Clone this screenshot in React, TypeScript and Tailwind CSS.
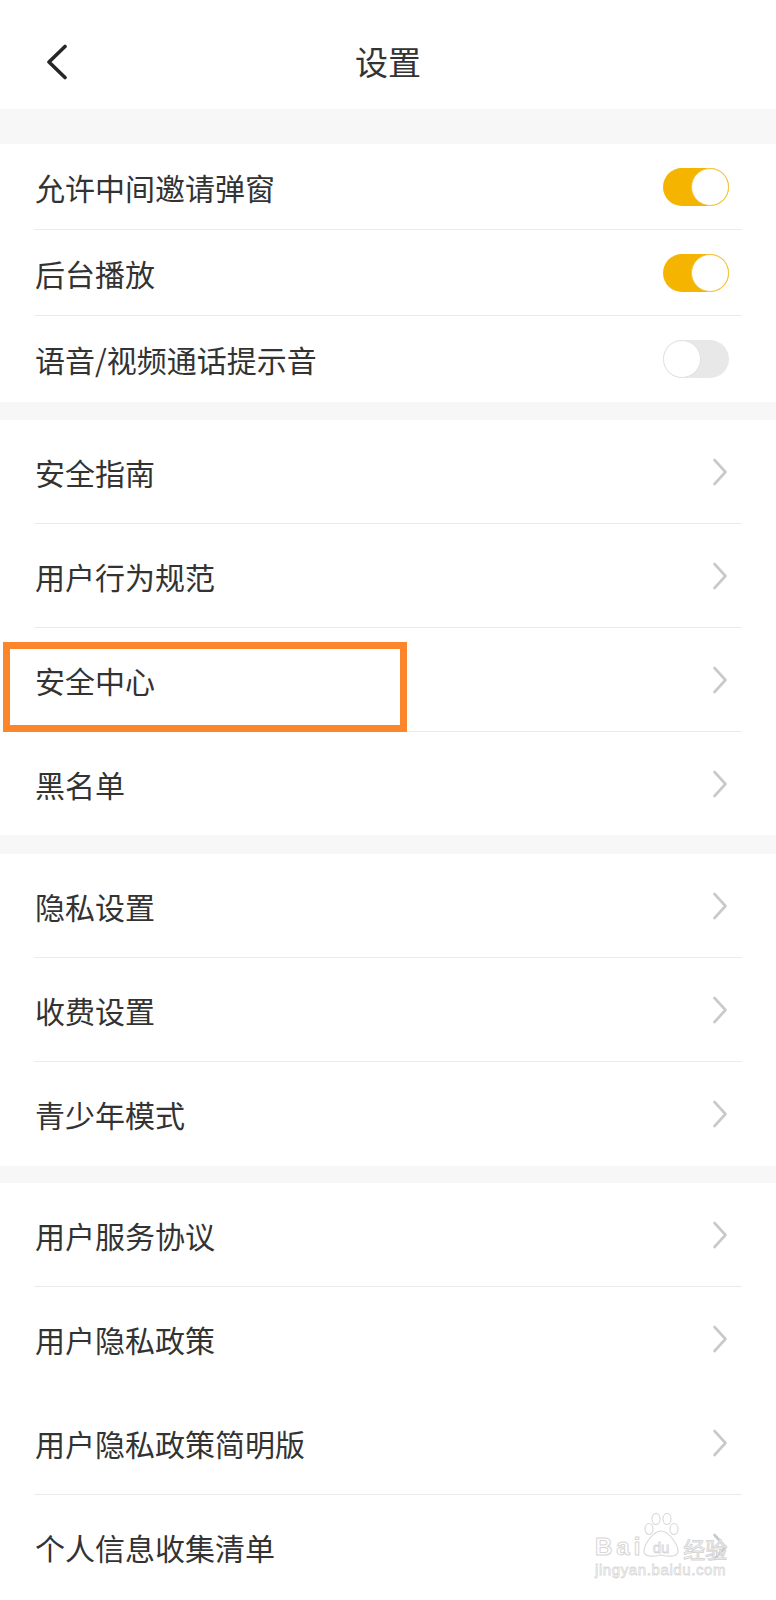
import React from "react";

const FONT = { fontFamily: '"Noto Sans CJK SC", "Noto Sans", sans-serif' };

function Chevron() {
  return (
    <svg width="16" height="28" viewBox="0 0 16 28" fill="none">
      <polyline points="2.5,2 13.5,14 2.5,26" stroke="#c9c9c9" strokeWidth="2.6" strokeLinecap="round" strokeLinejoin="round" />
    </svg>
  );
}

function Toggle({ on }: { on: boolean }) {
  return on ? (
    <div className="flex h-[38px] w-[66px] justify-end rounded-full bg-[#f5b400]">
      <div className="h-[38px] w-[38px] rounded-full border-[1.5px] border-[#f2c63e] bg-white" />
    </div>
  ) : (
    <div className="flex h-[38px] w-[66px] justify-start rounded-full bg-[#e8e8e8]">
      <div className="h-[38px] w-[38px] rounded-full border-[1.5px] border-[#e2e2e2] bg-white" />
    </div>
  );
}

function ToggleRow({ label, on, last }: { label: string; on: boolean; last?: boolean }) {
  return (
    <div className="px-[34px]">
      <div className={`flex h-[86px] items-center justify-between pl-[1px] pr-[13px] ${last ? "" : "border-b border-[#ebebeb]"}`}>
        <span className="text-[30px] leading-none text-[#333333]">{label}</span>
        <Toggle on={on} />
      </div>
    </div>
  );
}

function LinkRow({
  label,
  h,
  border,
  children,
}: {
  label: string;
  h: string;
  border?: boolean;
  children?: React.ReactNode;
}) {
  return (
    <div className="relative px-[34px]">
      <div className={`flex ${h} items-center justify-between pl-[1px] pr-[14px] ${border ? "border-b border-[#ebebeb]" : ""}`}>
        <span className="text-[30px] leading-none text-[#333333]">{label}</span>
        <Chevron />
      </div>
      {children}
    </div>
  );
}

function Gap({ h }: { h: string }) {
  return <div className={`${h} bg-[#f7f7f7]`} />;
}

function Watermark() {
  return (
    <div className="pointer-events-none absolute left-[595px] top-[18px] flex flex-col items-start">
      <div className="flex items-end">
        <span
          className="text-[24px] font-bold leading-none tracking-[4px] text-white [-webkit-text-stroke:1px_#d6d6d6]"
          style={{ fontFamily: '"Liberation Sans", Arial, sans-serif' }}
        >
          Bai
        </span>
        <svg width="42" height="46" viewBox="0 0 42 46" fill="none" className="-ml-[4px]">
          <ellipse cx="9" cy="16" rx="4" ry="5.5" stroke="#dadada" strokeWidth="1.2" fill="white" />
          <ellipse cx="16" cy="6" rx="4" ry="5.5" stroke="#dadada" strokeWidth="1.2" fill="white" />
          <ellipse cx="27" cy="6" rx="4" ry="5.5" stroke="#dadada" strokeWidth="1.2" fill="white" />
          <ellipse cx="34" cy="16" rx="4" ry="5.5" stroke="#dadada" strokeWidth="1.2" fill="white" />
          <path d="M21 18 C13 18 4 32 4 38 C4 44 12 44 21 42 C30 44 38 44 38 38 C38 32 29 18 21 18 Z" stroke="#dadada" strokeWidth="1.2" fill="white" />
          <text x="21" y="40" textAnchor="middle" fontSize="15" fontFamily="Liberation Sans, Arial, sans-serif" fill="white" stroke="#d6d6d6" strokeWidth="0.8">
            du
          </text>
        </svg>
        <span
          className="ml-[1px] text-[22px] leading-none text-white [-webkit-text-stroke:1px_#d6d6d6]"
          style={FONT}
        >
          经验
        </span>
      </div>
      <span
        className="mt-[3px] text-[15px] leading-none tracking-[0.6px] text-white [-webkit-text-stroke:0.8px_#dadada]"
        style={{ fontFamily: '"Liberation Sans", Arial, sans-serif' }}
      >
        jingyan.baidu.com
      </span>
    </div>
  );
}

export default function App() {
  return (
    <div className="min-h-[1600px] w-[776px] overflow-hidden bg-white" style={FONT}>
      {/* Header */}
      <div className="grid h-[109px] grid-cols-[1fr_auto_1fr] items-center pt-[15px]">
        <div className="pl-[44px]">
          <svg width="24" height="36" viewBox="0 0 24 36" fill="none">
            <polyline points="21,2.5 5,18 21,33.5" stroke="#262626" strokeWidth="3.6" strokeLinecap="round" strokeLinejoin="round" />
          </svg>
        </div>
        <div className="pb-[2px] text-[33px] leading-none text-[#333333]">设置</div>
        <div />
      </div>

      <Gap h="h-[35px]" />

      <ToggleRow label="允许中间邀请弹窗" on />
      <ToggleRow label="后台播放" on />
      <ToggleRow label="语音/视频通话提示音" on={false} last />

      <Gap h="h-[18px]" />

      <LinkRow label="安全指南" h="h-[104px]" border />
      <LinkRow label="用户行为规范" h="h-[104px]" border />
      <LinkRow label="安全中心" h="h-[104px]" border>
        <div className="pointer-events-none absolute left-[3px] top-[14px] h-[90px] w-[404px] border-[7px] border-[#fc862b]" />
      </LinkRow>
      <LinkRow label="黑名单" h="h-[103px]" />

      <Gap h="h-[19px]" />

      <LinkRow label="隐私设置" h="h-[104px]" border />
      <LinkRow label="收费设置" h="h-[104px]" border />
      <LinkRow label="青少年模式" h="h-[104px]" />

      <Gap h="h-[17px]" />

      <LinkRow label="用户服务协议" h="h-[104px]" border />
      <LinkRow label="用户隐私政策" h="h-[104px]" />
      <LinkRow label="用户隐私政策简明版" h="h-[104px]" border />
      <LinkRow label="个人信息收集清单" h="h-[104px]">
        <Watermark />
      </LinkRow>
    </div>
  );
}
